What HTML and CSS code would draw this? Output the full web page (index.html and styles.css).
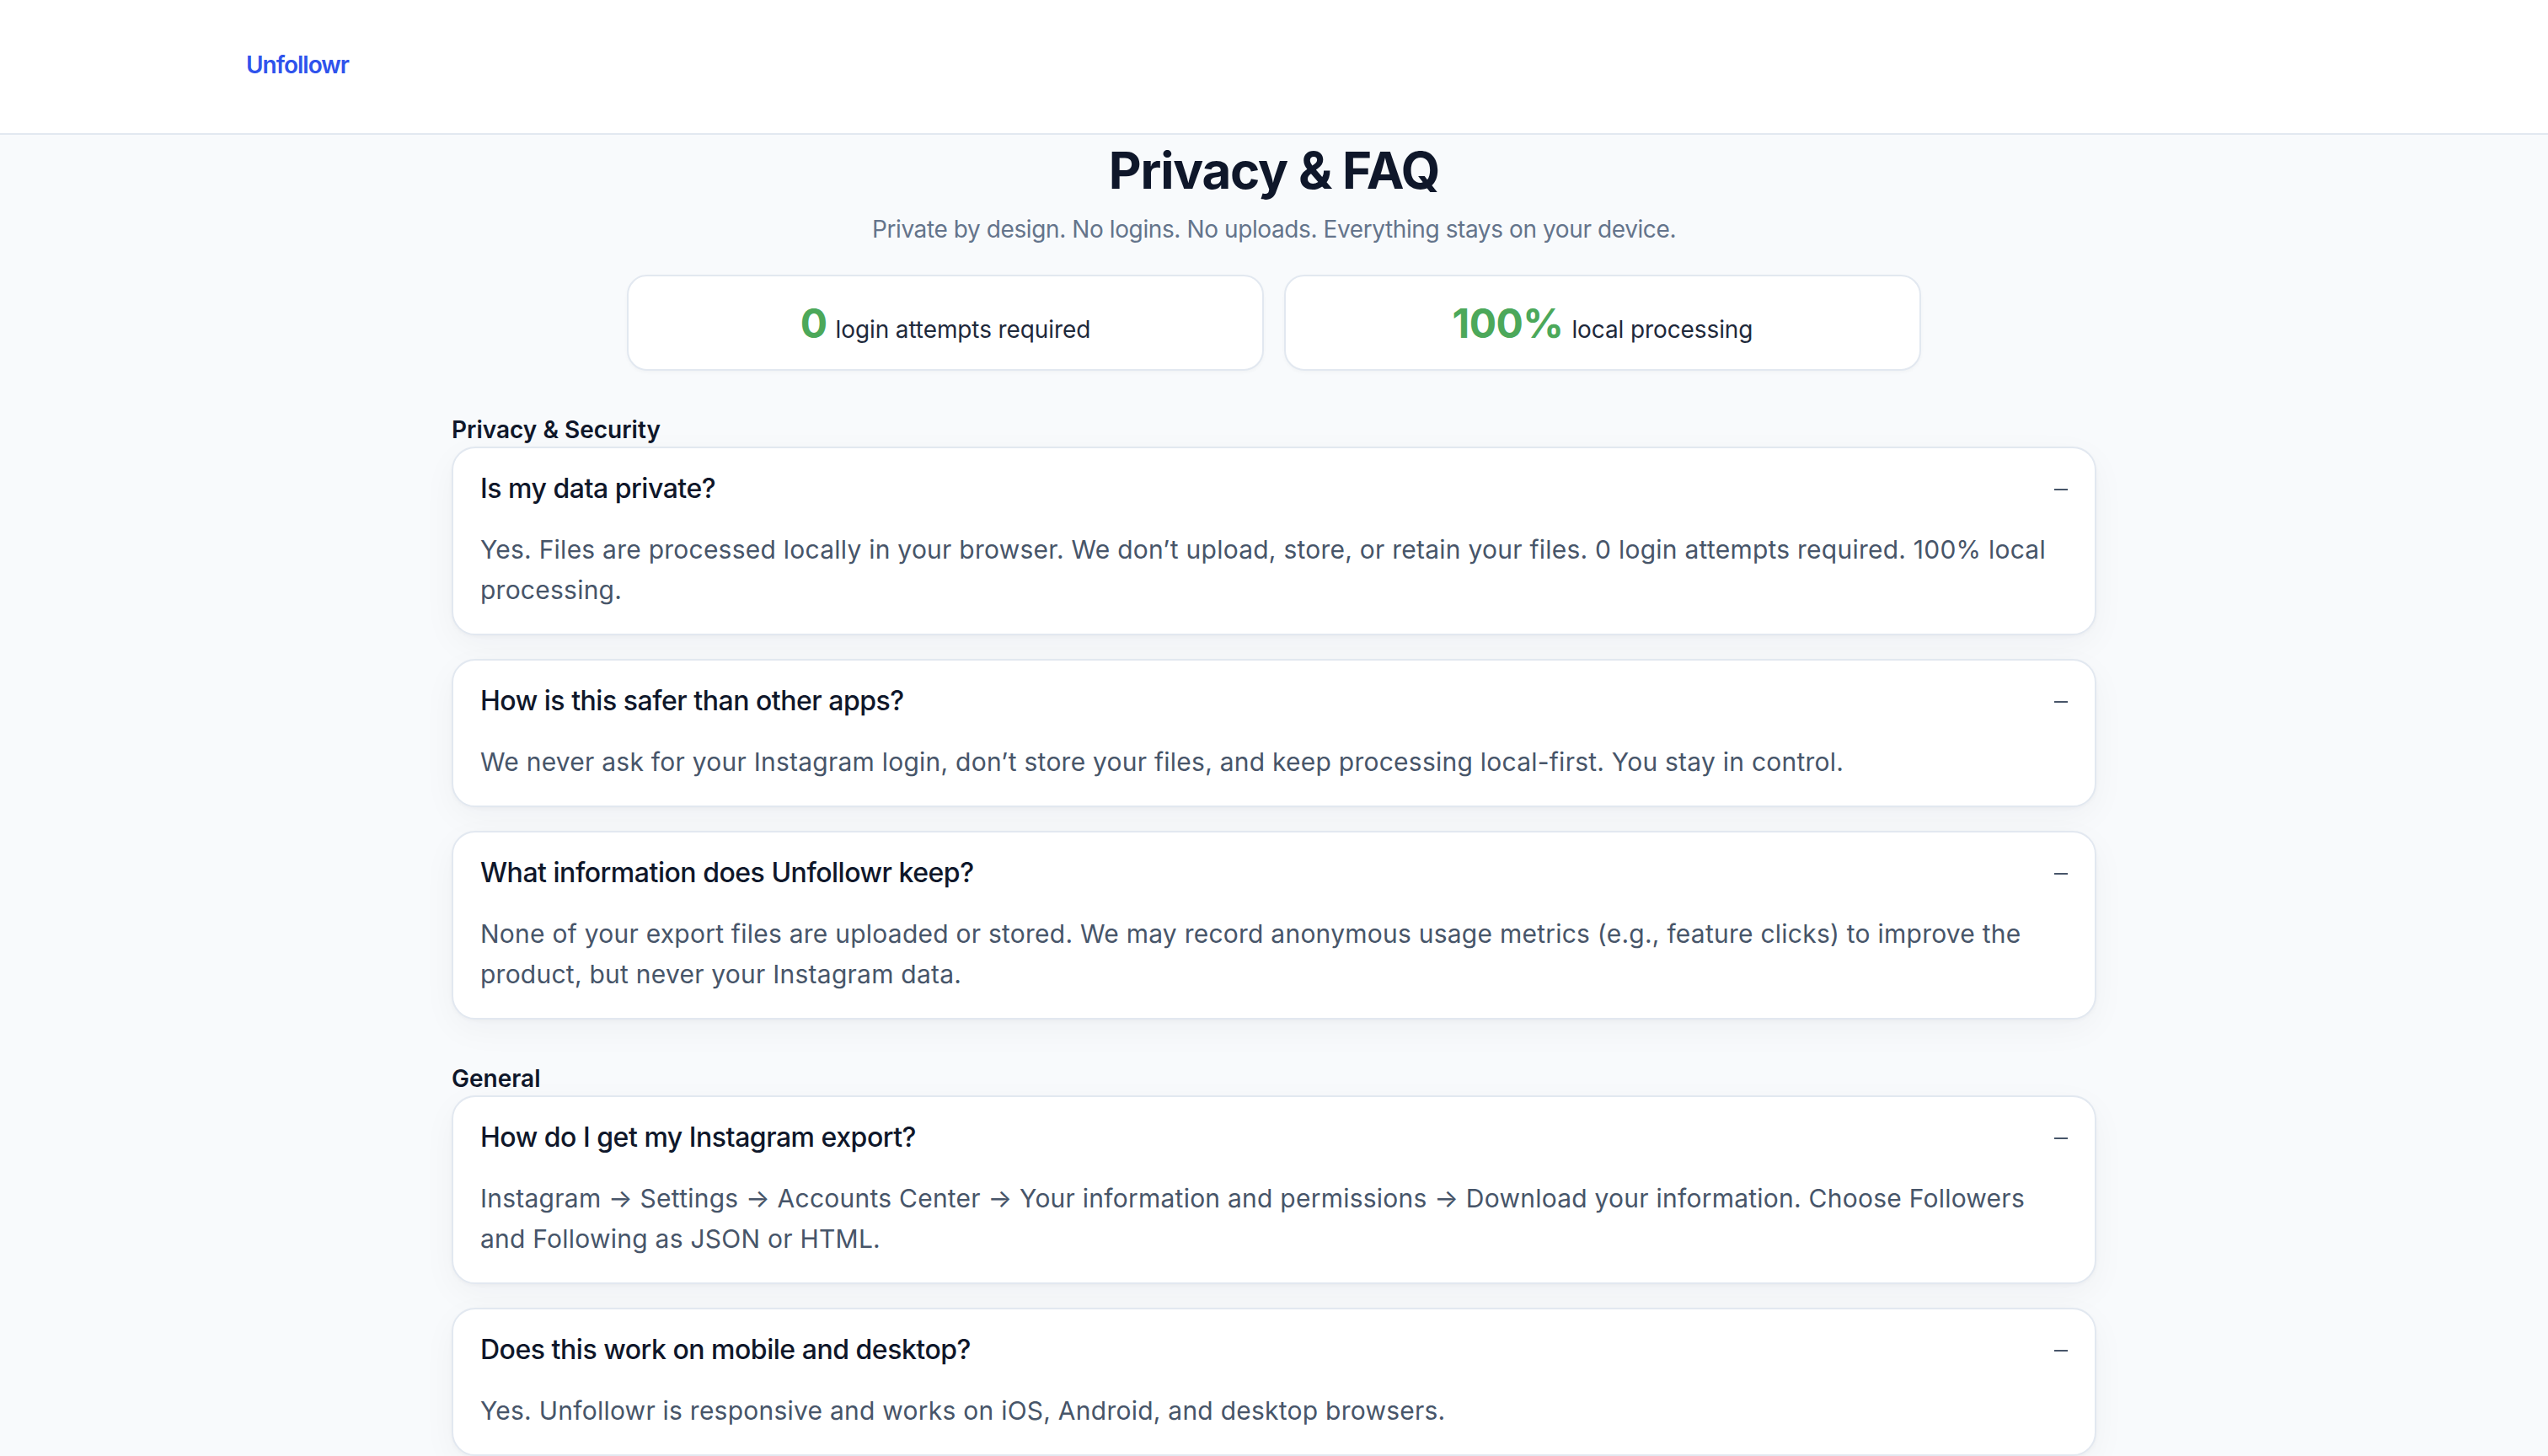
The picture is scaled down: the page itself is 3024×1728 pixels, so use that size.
FILE: index.html
```html
<!DOCTYPE html>
<html lang="en">
<head>
<meta charset="utf-8">
<title>Privacy &amp; FAQ – Unfollowr</title>
<link rel="stylesheet" href="styles.css">
</head>
<body>
<header class="site-header">
  <div class="header-inner">
    <a class="logo" href="#">Unfollowr</a>
  </div>
</header>
<main class="page">
  <section class="hero">
    <h1 class="title">Privacy &amp; FAQ</h1>
    <p class="lead">Private by design. No logins. No uploads. Everything stays on your device.</p>
    <div class="stats">
      <div class="stat"><span class="stat-num">0</span><span class="stat-label">login attempts required</span></div>
      <div class="stat"><span class="stat-num">100%</span><span class="stat-label">local processing</span></div>
    </div>
  </section>

  <section class="faq-group">
    <h2 class="group-title">Privacy &amp; Security</h2>
    <div class="faq-list">
      <div class="faq-item">
        <div class="faq-q"><span>Is my data private?</span><span class="minus"></span></div>
        <p class="faq-a">Yes. Files are processed locally in your browser. We don’t upload, store, or retain your files. 0 login attempts required. 100% local processing.</p>
      </div>
      <div class="faq-item">
        <div class="faq-q"><span>How is this safer than other apps?</span><span class="minus"></span></div>
        <p class="faq-a">We never ask for your Instagram login, don’t store your files, and keep processing local-first. You stay in control.</p>
      </div>
      <div class="faq-item">
        <div class="faq-q"><span>What information does Unfollowr keep?</span><span class="minus"></span></div>
        <p class="faq-a">None of your export files are uploaded or stored. We may record anonymous usage metrics (e.g., feature clicks) to improve the product, but never your Instagram data.</p>
      </div>
    </div>
  </section>

  <section class="faq-group">
    <h2 class="group-title">General</h2>
    <div class="faq-list">
      <div class="faq-item">
        <div class="faq-q"><span>How do I get my Instagram export?</span><span class="minus"></span></div>
        <p class="faq-a">Instagram → Settings → Accounts Center → Your information and permissions → Download your information. Choose Followers and Following as JSON or HTML.</p>
      </div>
      <div class="faq-item">
        <div class="faq-q"><span>Does this work on mobile and desktop?</span><span class="minus"></span></div>
        <p class="faq-a">Yes. Unfollowr is responsive and works on iOS, Android, and desktop browsers.</p>
      </div>
    </div>
  </section>
</main>
</body>
</html>
```
FILE: styles.css
```css
html {
  zoom: 2;
}
* {
  box-sizing: border-box;
}
body {
  margin: 0;
  background: #f8fafc;
  font-family: Inter, "Noto Sans", "Liberation Sans", sans-serif;
  color: #0f172a;
  -webkit-font-smoothing: antialiased;
}
.site-header {
  background: #ffffff;
  border-bottom: 1px solid #e2e8f0;
  height: 80px;
}
.header-inner {
  max-width: 1220px;
  margin: 0 auto;
  padding: 28px 0 0;
}
.logo {
  display: inline-block;
  font-size: 14px;
  line-height: 20px;
  font-weight: 600;
  color: #2f53ec;
  text-decoration: none;
  letter-spacing: -0.5px;
}
.page {
  padding: 3px 0 40px;
}
.hero {
  text-align: center;
}
.title {
  margin: 0;
  font-size: 30px;
  line-height: 36px;
  font-weight: 700;
  color: #0f172a;
  letter-spacing: -0.6px;
}
.lead {
  margin: 7px 0 0;
  font-size: 14px;
  line-height: 20px;
  color: #64748b;
  letter-spacing: -0.2px;
}
.stats {
  max-width: 768px;
  margin: 17px auto 0;
  display: grid;
  grid-template-columns: 1fr 1fr;
  gap: 12px;
}
.stat {
  background: #ffffff;
  border: 1px solid #e2e8f0;
  border-radius: 12px;
  padding: 12px 16px 11px;
  display: flex;
  justify-content: center;
  align-items: baseline;
  gap: 5px;
  box-shadow: 0 1px 2px rgba(15, 23, 42, 0.03);
}
.stat-num {
  font-size: 24px;
  line-height: 32px;
  font-weight: 700;
  color: #4ca85a;
  letter-spacing: -0.3px;
}
.stat-label {
  font-size: 14px;
  line-height: 20px;
  color: #1e293b;
  letter-spacing: -0.05px;
}
.faq-group {
  max-width: 1024px;
  margin: 25px auto 0;
  padding: 0 24px;
}
.group-title {
  margin: 0;
  font-size: 14px;
  line-height: 20px;
  font-weight: 600;
  color: #0f172a;
}
.faq-list {
  display: flex;
  flex-direction: column;
  gap: 14px;
}
.faq-item {
  background: #ffffff;
  border: 1px solid #e2e8f0;
  border-radius: 14px;
  padding: 12px 16px 14px;
  box-shadow: 0 1px 2px rgba(15, 23, 42, 0.03), 0 6px 20px rgba(15, 23, 42, 0.04);
}
.faq-q {
  display: flex;
  justify-content: space-between;
  align-items: center;
  font-size: 16px;
  line-height: 24px;
  font-weight: 500;
  color: #0f172a;
  letter-spacing: -0.24px;
}
.minus {
  width: 8px;
  height: 1.4px;
  background: #475569;
  flex: none;
  margin-top: 1px;
}
.faq-a {
  margin: 12px 0 0;
  font-size: 15px;
  line-height: 24px;
  color: #475569;
  letter-spacing: 0.12px;
}
```
